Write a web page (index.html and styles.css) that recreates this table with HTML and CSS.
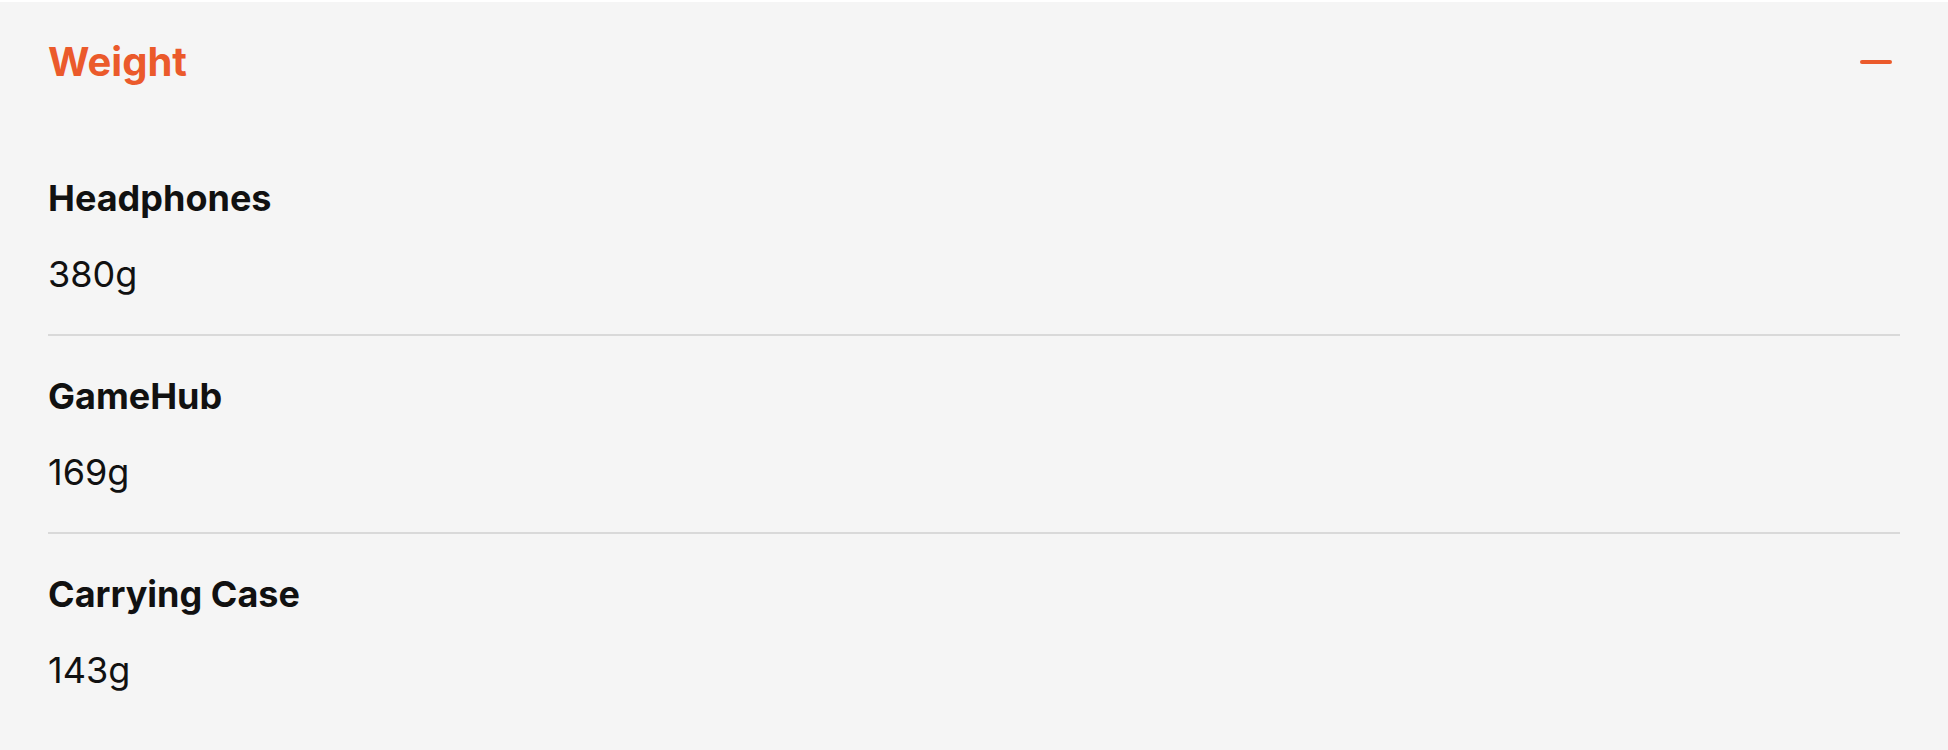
FILE: index.html
```html
<!DOCTYPE html>
<html lang="en">
<head>
<meta charset="utf-8">
<title>Weight</title>
<link rel="stylesheet" href="styles.css">
</head>
<body>
<section class="panel">
  <header class="panel-head">
    <h2 class="panel-title">Weight</h2>
    <button class="toggle" type="button" aria-label="Collapse"><span class="toggle-bar"></span></button>
  </header>
  <ul class="spec-list">
    <li class="spec-item">
      <span class="spec-name">Headphones</span>
      <span class="spec-value">380g</span>
    </li>
    <li class="spec-item">
      <span class="spec-name">GameHub</span>
      <span class="spec-value">169g</span>
    </li>
    <li class="spec-item">
      <span class="spec-name">Carrying Case</span>
      <span class="spec-value">143g</span>
    </li>
  </ul>
</section>
</body>
</html>
```

FILE: styles.css
```css
* { box-sizing: border-box; }

html, body {
  margin: 0;
  padding: 0;
  background: #ffffff;
}

body {
  font-family: Inter, "Noto Sans", "Liberation Sans", sans-serif;
  color: #111111;
}

.panel {
  margin-top: 2px;
  min-height: 748px;
  background: #f5f5f5;
  padding: 0 48px;
}

.panel-head {
  height: 120px;
  display: flex;
  align-items: center;
  justify-content: space-between;
}

.panel-title {
  margin: 0;
  font-size: 40px;
  line-height: 48px;
  font-weight: 700;
  color: #eb5a2b;
}

.toggle {
  width: 48px;
  height: 48px;
  padding: 0;
  border: 0;
  background: transparent;
  display: flex;
  align-items: center;
  justify-content: center;
}

.toggle-bar {
  width: 32px;
  height: 4px;
  border-radius: 2px;
  background: #eb5a2b;
}

.spec-list {
  list-style: none;
  margin: 0;
  padding: 16px 0 0;
}

.spec-item {
  display: flex;
  flex-direction: column;
  gap: 32px;
  padding: 38px 0;
  border-bottom: 2px solid #d9d9d9;
}

.spec-item:last-child {
  border-bottom: 0;
}

.spec-name {
  font-size: 36px;
  line-height: 44px;
  font-weight: 700;
}

.spec-value {
  font-size: 36px;
  line-height: 44px;
  font-weight: 400;
}
```
